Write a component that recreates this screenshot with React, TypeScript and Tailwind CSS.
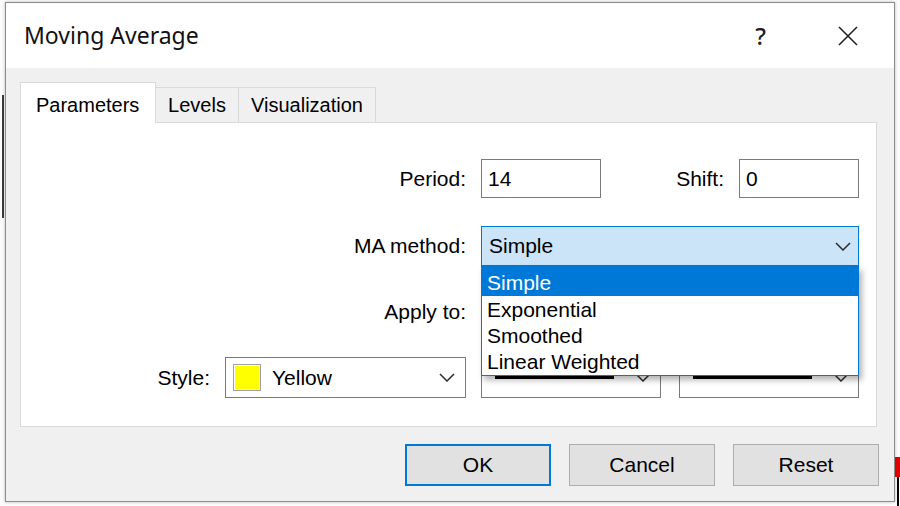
import type { ReactNode } from 'react'

// Boîte de dialogue "Moving Average" façon Windows, liste MA method ouverte.

function Chevron() {
  return (
    <svg width="16" height="9" viewBox="0 0 16 9" className="shrink-0">
      <path d="M1 1l7 7 7-7" fill="none" stroke="#2b2b2b" strokeWidth="1.5" />
    </svg>
  )
}

function Label({ w, children }: { w: string; children: ReactNode }) {
  return <div className={`${w} shrink-0 text-right`}>{children}</div>
}

function LineSelect({ className }: { className: string }) {
  return (
    <div className={`${className} h-full border border-[#7a7a7a] bg-white flex items-center pl-[13px] pr-[9px]`}>
      <div className="w-[119px] h-[3px] bg-black" />
      <div className="ml-auto">
        <Chevron />
      </div>
    </div>
  )
}

const methods = ['Simple', 'Exponential', 'Smoothed', 'Linear Weighted']

export default function App() {
  return (
    <div className="w-[900px] h-[506px] bg-[#fbfbfb] flex overflow-hidden font-['Liberation_Sans',Arial,sans-serif] text-[21px] text-black">
      {/* fond à gauche */}
      <div className="w-[5px] shrink-0 pt-[95px]">
        <div className="ml-[2px] w-[2px] h-[123px] bg-[#3a3a3a]" />
      </div>

      {/* fenêtre */}
      <div className="w-[890px] h-[500px] mt-[2px] shrink-0 border border-[#8c8c8c] bg-[#f0f0f0] flex flex-col shadow-[0_0_3px_rgba(0,0,0,0.25)]">
        <div className="h-[65px] bg-white flex items-center pl-[18px] pr-[36px]">
          <span className="font-['Noto_Sans',sans-serif] text-[23px] text-[#111]">Moving Average</span>
          <span className="ml-auto font-['Noto_Sans',sans-serif] text-[24px] font-medium text-[#222]">?</span>
          <svg width="20" height="20" viewBox="0 0 20 20" className="ml-[72px]">
            <path d="M1 1L19 19M19 1L1 19" stroke="#222" strokeWidth="1.6" />
          </svg>
        </div>

        <div className="flex-1 flex flex-col pl-[14px] pr-[17px] pt-[14px]">
          {/* onglets */}
          <div className="flex items-start h-[40px] text-[20px]">
            <div className="relative z-10 w-[136px] h-[41px] bg-white border border-b-0 border-[#d9d9d9] pl-[15px] pt-[7px]">
              Parameters
            </div>
            <div className="mt-[5px] w-[83px] h-[35px] bg-[#f0f0f0] border border-l-0 border-b-0 border-[#d9d9d9] flex items-center justify-center">
              Levels
            </div>
            <div className="mt-[5px] w-[137px] h-[35px] bg-[#f0f0f0] border border-l-0 border-b-0 border-[#d9d9d9] flex items-center justify-center">
              Visualization
            </div>
          </div>

          {/* panneau */}
          <div className="h-[305px] bg-white border border-[#d9d9d9] pt-[36px] flex flex-col">
            <div className="flex items-center h-[39px]">
              <Label w="w-[445px]">Period:</Label>
              <div className="ml-[15px] w-[120px] h-full border border-[#7a7a7a] flex items-center pl-[6px]">14</div>
              <Label w="w-[123px]">Shift:</Label>
              <div className="ml-[15px] w-[120px] h-full border border-[#7a7a7a] flex items-center pl-[6px]">0</div>
            </div>

            <div className="flex items-center h-[40px] mt-[28px]">
              <Label w="w-[445px]">MA method:</Label>
              <div className="relative z-20 ml-[15px] w-[378px] h-full">
                <div className="h-full bg-[#cce4f7] border border-[#0078d7] flex items-center pl-[7px] pr-[7px]">
                  <span>Simple</span>
                  <div className="ml-auto">
                    <Chevron />
                  </div>
                </div>
                <div className="absolute top-full left-0 w-full bg-white border border-[#0078d7] pb-[1px] shadow-[3px_4px_6px_rgba(0,0,0,0.3)]">
                  {methods.map((m, i) => (
                    <div
                      key={m}
                      className={
                        i === 0
                          ? 'h-[29px] flex items-center pl-[5px] pt-[3px] bg-[#0078d7] text-white'
                          : 'h-[26px] flex items-center pl-[5px] pt-[2px]'
                      }
                    >
                      {m}
                    </div>
                  ))}
                </div>
              </div>
            </div>

            <div className="flex items-center h-[40px] mt-[26px]">
              <Label w="w-[445px]">Apply to:</Label>
              <div className="ml-[15px] w-[378px] h-full border border-[#7a7a7a]" />
            </div>

            <div className="flex items-center h-[41px] mt-[25px]">
              <Label w="w-[189px]">Style:</Label>
              <div className="ml-[15px] w-[241px] h-full border border-[#7a7a7a] bg-white flex items-center pl-[7px] pr-[10px]">
                <div className="w-[28px] h-[27px] border border-[#a0a0a0] p-[1px] bg-white">
                  <div className="w-full h-full bg-[#ffff00]" />
                </div>
                <span className="ml-[11px]">Yellow</span>
                <div className="ml-auto">
                  <Chevron />
                </div>
              </div>
              <LineSelect className="ml-[15px] w-[180px]" />
              <LineSelect className="ml-[18px] w-[180px]" />
            </div>
          </div>

          {/* boutons */}
          <div className="flex justify-end gap-[18px] mt-[17px] -mr-[2px]">
            <button className="w-[146px] h-[42px] bg-[#e1e1e1] border-2 border-[#0078d7] text-[21px]">OK</button>
            <button className="w-[146px] h-[42px] bg-[#e1e1e1] border border-[#adadad] text-[21px]">Cancel</button>
            <button className="w-[146px] h-[42px] bg-[#e1e1e1] border border-[#adadad] text-[21px]">Reset</button>
          </div>
        </div>
      </div>

      {/* fond à droite */}
      <div className="w-[5px] shrink-0 pt-[457px] flex flex-col">
        <div className="h-[20px] bg-[#e00000]" />
        <div className="ml-[2px] w-[2px] h-[29px] bg-black" />
      </div>
    </div>
  )
}
